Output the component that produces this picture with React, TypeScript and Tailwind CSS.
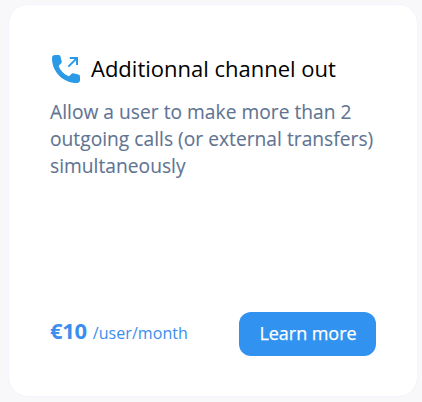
function OutgoingCallIcon() {
  return (
    <svg className="h-7 w-7 shrink-0" viewBox="0 0 28 28" fill="none" aria-hidden="true">
      <path
        fill="#2b9ae6"
        d="M3.2 0H6.3C7.5 0 8.2.6 8.5 1.7L9.6 6C9.9 7.4 9.6 8.3 8.5 9.1L7.2 10.2C6.7 10.6 6.6 11.1 6.9 11.7C8.8 15.8 12 19.2 16.3 21.1C16.9 21.4 17.3 21.3 17.7 20.8L18.9 19.5C19.7 18.4 20.6 18.1 22 18.4L26.3 19.5C27.4 19.8 28 20.5 28 21.7V24.8C28 27 27 28 24.8 28C11.1 28 0 16.9 0 3.2C0 1 1 0 3.2 0Z"
      />
      <path stroke="#2b9ae6" strokeWidth="2" d="M16.4 11.6L25.1 2.9M17.8 3h7.2v7" />
    </svg>
  );
}

export default function App() {
  return (
    <main className="flex h-[402px] w-[422px] bg-[#f8f8fa] pt-1 pr-1 pb-[5px] pl-2 font-['Open_Sans',sans-serif]">
      <article className="flex flex-1 flex-col rounded-[20px] border border-[#f3f4fd] bg-white pt-[46px] pr-[41px] pb-[40px] pl-[41px]">
        <header className="flex h-9 items-center gap-[11px] pl-[2px]">
          <OutgoingCallIcon />
          <h2 className="-mt-0.5 text-[22px] leading-9 whitespace-nowrap text-black">
            Additionnal channel out
          </h2>
        </header>
        <p className="mt-[11px] text-[19.2px] leading-[27px] tracking-[0.02px] whitespace-nowrap text-[#5f7492] [-webkit-text-stroke:0.1px]">
          Allow a user to make more than 2<br />
          outgoing calls (or external transfers)<br />
          simultaneously
        </p>
        <footer className="mt-auto flex items-center justify-between">
          <div className="mb-2 flex items-baseline gap-[6px] whitespace-nowrap text-[#3b8eee]">
            <strong className="text-[22px] leading-8 font-bold tracking-[-0.3px]">€10</strong>
            <span className="text-[16px] tracking-[0.05px]">/user/month</span>
          </div>
          <button className="h-11 w-[137px] rounded-[12px] bg-[#3192f0] pb-0.5 pl-px text-[18px] tracking-[-0.05px] text-white [-webkit-text-stroke:0.25px]">
            Learn more
          </button>
        </footer>
      </article>
    </main>
  );
}
